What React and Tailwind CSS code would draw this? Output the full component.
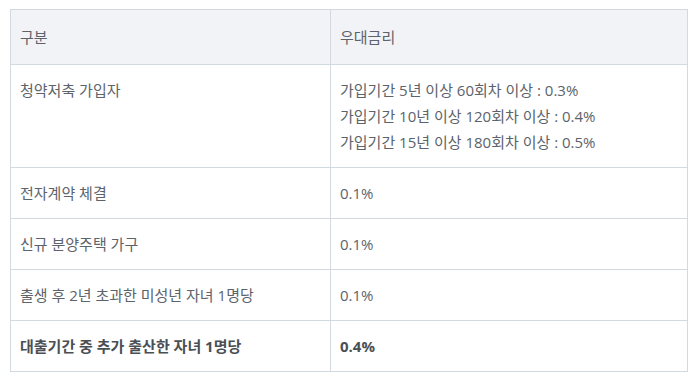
const rows = [
  {
    label: '청약저축 가입자',
    values: [
      '가입기간 5년 이상 60회차 이상 : 0.3%',
      '가입기간 10년 이상 120회차 이상 : 0.4%',
      '가입기간 15년 이상 180회차 이상 : 0.5%',
    ],
  },
  { label: '전자계약 체결', values: ['0.1%'] },
  { label: '신규 분양주택 가구', values: ['0.1%'] },
  { label: '출생 후 2년 초과한 미성년 자녀 1명당', values: ['0.1%'] },
  { label: '대출기간 중 추가 출산한 자녀 1명당', values: ['0.4%'], bold: true },
];

export default function App() {
  return (
    <div
      className="w-[698px] h-[382px] bg-white pt-[9px] pl-[10px]"
      style={{ fontFamily: '"Open Sans", "Noto Sans CJK KR", sans-serif' }}
    >
      <table className="w-[678px] border-collapse border border-[#d3d9e1] text-[#5c636b]">
        <thead>
          <tr className="bg-[#f1f3f6]">
            <th className="w-[320px] border border-[#d3d9e1] pl-[9px] py-[14px] text-left text-[15px] font-normal leading-[26px]">
              구분
            </th>
            <th className="border border-[#d3d9e1] pl-[9px] py-[14px] text-left text-[15px] font-normal leading-[26px]">
              우대금리
            </th>
          </tr>
        </thead>
        <tbody>
          {rows.map((row) => (
            <tr key={row.label} className={row.bold ? 'font-bold text-[#4a4f56]' : ''}>
              <td className="align-top border border-[#d3d9e1] pl-[9px] pt-[12px] pb-[12px] text-[15px] leading-[26px]">
                {row.label}
              </td>
              <td className="align-top border border-[#d3d9e1] pl-[9px] pt-[12px] pb-[12px] text-[15px] leading-[26px]">
                {row.values.map((v) => (
                  <div key={v}>{v}</div>
                ))}
              </td>
            </tr>
          ))}
        </tbody>
      </table>
    </div>
  );
}
